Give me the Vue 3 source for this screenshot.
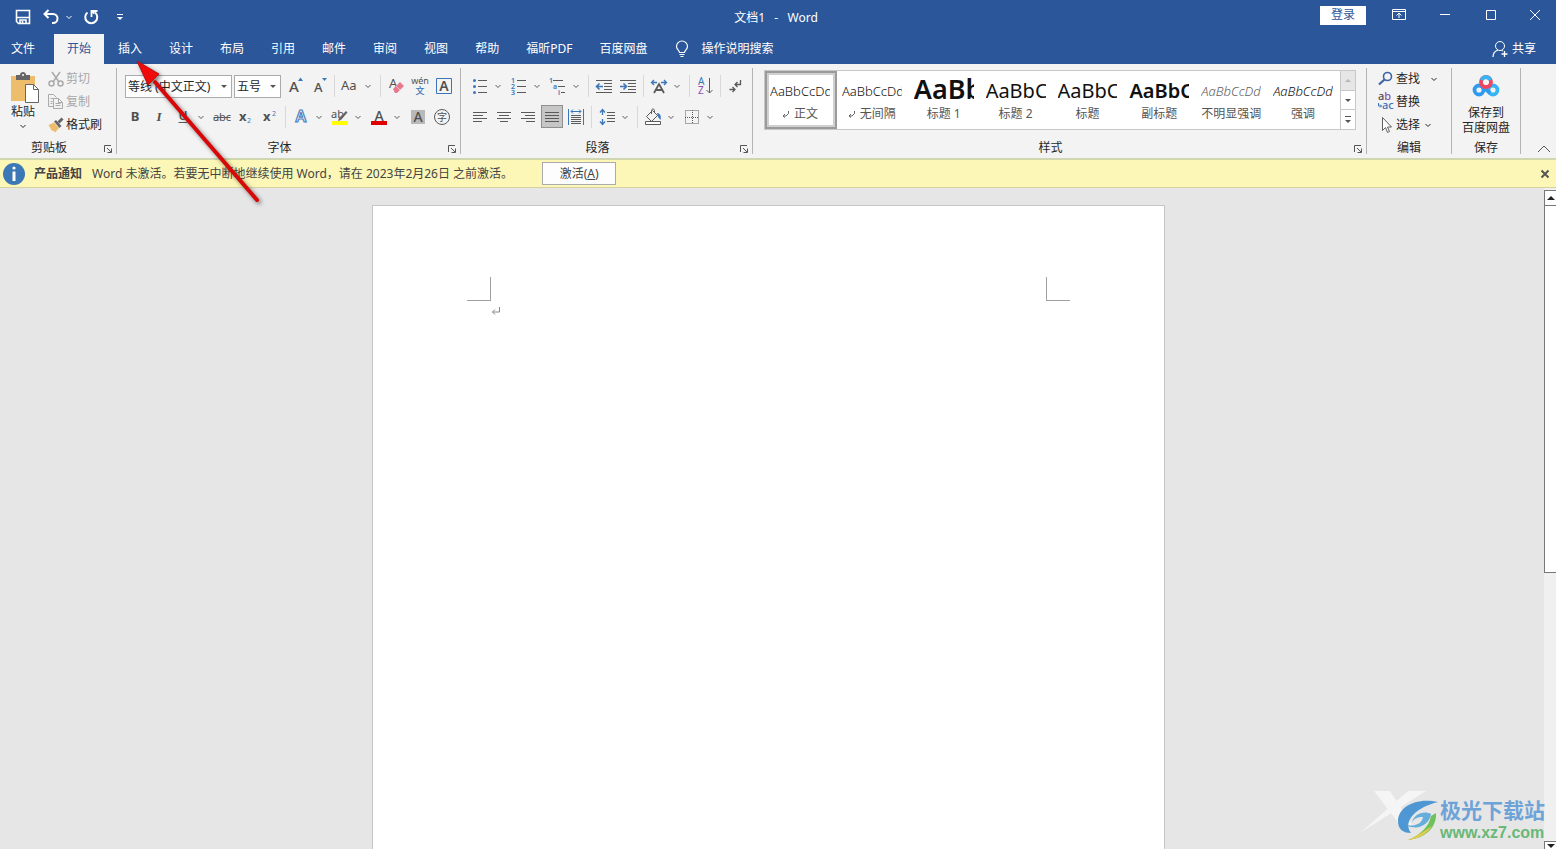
<script setup>
import { ref } from 'vue'

const tabs = ['开始', '插入', '设计', '布局', '引用', '邮件', '审阅', '视图', '帮助', '福昕PDF', '百度网盘']
const activeTab = ref('开始')
const fontName = ref('等线 (中文正文)')
const fontSize = ref('五号')

const gray = '#5a5a5a'
const lines = (xs, color = gray) =>
  xs.map(([x1, x2, y]) => `<path d="M${x1} ${y}.5H${x2}" stroke="${color}" fill="none"/>`).join('')

const icons = {
  save: '<path d="M5.500 5.500h13v13h-11l-2-2z" stroke-width="1.600"/><path d="M5.500 12.500h13M9 18v-3h6v3M11.500 18v-2" stroke-width="1.600"/>',
  undo: '<path d="M9.500 5 5.500 9l4 4M6 9h8a4.500 4.500 0 0 1 0 9h-1" stroke-width="2"/>',
  redo: '<path d="M8.500 7.500a6 6 0 1 0 7.500 0" stroke-width="2"/><path d="M18.500 6h-6v6M12.500 6l3 2.500" stroke-width="1.800"/>',
  more: '<path d="M9 9.500h6"/><path d="M9 12h6l-3 3z" fill="currentColor" stroke="none"/>',
  ribbonOptions: '<path d="M5.500 6.500h13v10h-13zM5.500 8.500h13M12 15v-5M9.500 12.500 12 10l2.500 2.500"/>',
  minimize: '<path d="M7 11.500h10"/>',
  maximize: '<path d="M7.500 7.500h9v9h-9z"/>',
  close: '<path d="m7 7 10 10M17 7 7 17"/>',
  bulb: '<path d="M9.500 15.500c0-2-3-3-3-6a5 5 0 0 1 11 0c0 3-3 4-3 6zM9.500 17.500h5M10.500 19.500h3" stroke-width="1.200"/>',
  person: '<circle cx="12" cy="9" r="4.500"/><path d="M5 20c0-4 2-6 5-7M14 13.500l1 .5M16.500 14v6M13.500 17h6" stroke-width="1.300"/>',
  cut: '<g stroke="#aaa" stroke-width="1.500"><path d="M8 5l7 10M16 5 9 15"/><circle cx="7.500" cy="16.500" r="2.500"/><circle cx="16.500" cy="16.500" r="2.500"/></g>',
  copy: '<g stroke="#aaa"><path d="M9.500 16.500h-5v-12h5l3 3M6.500 8.500h3M6.500 11.500h2M6.500 13.500h2"/><path d="M9.500 8.500h5l4 4v6h-9zM14.500 8.500v4h4M11.500 13.500h5M11.500 15.500h5"/></g>',
  painter: '<path d="M4.500 12 10 9.500l5 5.500-4 4.500-2-2-1 .5z" fill="#eebd6c" stroke="none"/><path d="M10 8.500l2-1.500 5.500 6-2 2z" fill="#666" stroke="none"/><path d="M14.500 9.500l4-4" stroke="#666" stroke-width="3"/>',
  grow: '<text x="6" y="18" font-size="15" font-weight="500">A</text><path d="m15 7 2.500-3.500L20 7z" fill="#3b76b8" stroke="none"/>',
  shrink: '<text x="7" y="18" font-size="13" font-weight="500">A</text><path d="m15 4 2.500 3L20 4z" fill="#3b76b8" stroke="none"/>',
  caseChange: '<text x="3" y="16" font-size="13">Aa</text>',
  clear: '<text x="5" y="14" font-size="13">A</text><path d="m9 15 7-7 4 4-7 7h-2z" fill="#e8798b" stroke="none"/><path d="m12 12 4 4" stroke="#f6c3ca"/>',
  phonetic: '<text x="12" y="10" font-size="9" text-anchor="middle">wén</text><text x="12" y="20" font-size="9" font-weight="500" text-anchor="middle" class="b">文</text>',
  border: '<path d="M4.500 4.500h15v15h-15z" stroke="#3b76b8"/><text x="12" y="17" font-size="14" font-weight="600" text-anchor="middle">A</text>',
  bold: '<text x="12" y="16" font-size="13" font-weight="700" text-anchor="middle">B</text>',
  italic: '<text x="12" y="16" font-size="13" font-weight="600" font-style="italic" font-family="Liberation Serif, serif" text-anchor="middle">I</text>',
  underline: '<text x="12" y="15" font-size="12" font-weight="600" text-anchor="middle">U</text><path d="M7.500 17.500h9"/>',
  strike: '<text x="12" y="16" font-size="11" text-anchor="middle">abc</text><path d="M3.500 12.500h17"/>',
  sub: '<text x="5" y="16" font-size="13" font-weight="700">x</text><text x="13" y="18" font-size="7" class="b">2</text>',
  sup: '<text x="5" y="16" font-size="13" font-weight="700">x</text><text x="14" y="11" font-size="7" class="b">2</text>',
  effect: '<text x="12" y="17" font-size="16" font-weight="600" text-anchor="middle" class="glow">A</text>',
  highlight: '<text x="3" y="13" font-size="11">ab</text><path d="m10 16 1-3 7-7 1.500 1.500-6.500 7.500z" fill="#666" stroke="none"/><path d="M4 16h16v4H4z" fill="#ff0" stroke="none"/>',
  color: '<text x="12" y="16" font-size="14" font-weight="500" text-anchor="middle">A</text><path d="M4 16h16v4H4z" fill="#e00000" stroke="none"/>',
  shade: '<path d="M5 5h14v14H5z" fill="#b9b9b9" stroke="none"/><text x="12" y="17" font-size="14" font-weight="500" text-anchor="middle">A</text>',
  circled: '<circle cx="12" cy="12" r="7.500"/><text x="12" y="16" font-size="10" text-anchor="middle">字</text>',
  bullets: lines([[10, 19, 6], [10, 19, 12], [10, 19, 18]]) + '<g fill="#3b76b8" stroke="none"><circle cx="6.500" cy="6.500" r="1.500"/><circle cx="6.500" cy="12.500" r="1.500"/><circle cx="6.500" cy="18.500" r="1.500"/></g>',
  numbers: lines([[10, 19, 6], [10, 19, 12], [10, 19, 18]]) + '<text x="4" y="9" font-size="7" font-weight="600" class="b">1</text><text x="4" y="15" font-size="7" font-weight="600" class="b">2</text><text x="4" y="21" font-size="7" font-weight="600" class="b">3</text>',
  multilevel: lines([[7, 17, 6], [12, 19, 12], [15, 19, 18]]) + '<text x="3" y="9" font-size="7" font-weight="600" class="b">1</text><text x="7" y="15" font-size="7" font-weight="600" class="b">a</text><text x="12" y="21" font-size="7" font-weight="600" class="b">i</text>',
  outdent: lines([[4, 20, 6], [12, 20, 9], [12, 20, 12], [12, 20, 15], [4, 20, 18]]) + '<path d="M11 12.500H5M7.500 9.500l-3 3 3 3" stroke="#3b76b8" stroke-width="1.600"/>',
  indent: lines([[4, 20, 6], [12, 20, 9], [12, 20, 12], [12, 20, 15], [4, 20, 18]]) + '<path d="M4 12.500h6M7.500 9.500l3 3-3 3" stroke="#3b76b8" stroke-width="1.600"/>',
  asian: '<path d="m7 19 5-9 5 9M9 16h6" stroke-width="1.800"/><path d="M10 8.500H4.500M7 6 4.500 8.500 7 11M14 8.500h5.500M17 6l2.500 2.500L17 11" stroke="#3b76b8" stroke-width="1.300"/>',
  sort: '<text x="5" y="11" font-size="10" class="b">A</text><text x="5" y="20" font-size="10" fill="#8a4fb5">Z</text><path d="M16.500 4v15M13.500 16l3 3 3-3"/>',
  marks: '<path d="M16.500 6v4.500H11M13.500 8l-2.500 2.500 2.500 2.500M5.500 15.500H11M8.500 13l2.500 2.500L8.500 18" stroke-width="1.300"/>',
  left: lines([[5, 19, 7], [5, 15, 10], [5, 19, 13], [5, 14, 16]]),
  center: lines([[5, 19, 7], [7, 17, 10], [5, 19, 13], [8, 16, 16]]),
  right: lines([[5, 19, 7], [9, 19, 10], [5, 19, 13], [10, 19, 16]]),
  justify: lines([[5, 19, 7], [5, 19, 10], [5, 19, 13], [5, 19, 16]]),
  distribute: lines([[7, 17, 10], [7, 17, 12], [7, 17, 14], [7, 17, 16], [7, 17, 18]]) + '<path d="M4.500 4v16M19.500 4v16M7 6.500h10M9 4.500l-2 2 2 2M15 4.500l2 2-2 2" stroke="#3b76b8"/>',
  spacing: lines([[12, 20, 7], [12, 20, 10], [12, 20, 13], [12, 20, 16]]) + '<path d="M7.500 5v5M7.500 14v5M5 7.500l2.500-3 2.500 3M5 16.500l2.500 3 2.500-3" stroke="#3b76b8" stroke-width="1.300"/>',
  bucket: '<path d="m5.500 11.500 6-6 5 5-6 6zM10.500 9V5.500c0-2 3-2 3 0V8"/><path d="M16 8c3 0 4.500 3 3.500 7l-2.500-3z" fill="#3b76b8" stroke="none"/><path d="M4.500 16.500h15v3h-15z" fill="#fff"/>',
  grid: '<path d="M5.500 5.500h13v13h-13zM12.500 5v13M5 12.500h13" stroke-dasharray="1 1"/>',
  find: '<circle cx="13.500" cy="9.500" r="4" stroke="#3b64a8" stroke-width="1.600"/><path d="m10.500 12.500-5.500 5" stroke="#3b64a8" stroke-width="2.200"/>',
  replace: '<text x="4" y="10" font-size="11" font-weight="500">a<tspan fill="#8a4fb5">b</tspan></text><text x="8" y="19" font-size="11" font-weight="500" class="b">ac</text><path d="M4.500 13v3h3M6 14.500 7.500 16 6 17.500" stroke="#3b76b8"/>',
  select: '<path d="M8.500 4.500v13l3-3 2 5 2-1-2-4.500h4z" fill="#fff"/>'
}

const fontTop = [
  { icon: 'grow', label: '增大字号' },
  { icon: 'shrink', label: '减小字号' },
  { sep: true },
  { icon: 'caseChange', label: '更改大小写', menu: true },
  { sep: true },
  { icon: 'clear', label: '清除格式' },
  { icon: 'phonetic', label: '拼音指南' },
  { icon: 'border', label: '字符边框' }
]
const fontBottom = [
  { icon: 'bold', label: '加粗' },
  { icon: 'italic', label: '倾斜' },
  { icon: 'underline', label: '下划线', menu: true },
  { icon: 'strike', label: '删除线' },
  { icon: 'sub', label: '下标' },
  { icon: 'sup', label: '上标' },
  { sep: true },
  { icon: 'effect', label: '文本效果', menu: true },
  { icon: 'highlight', label: '突出显示', menu: true },
  { icon: 'color', label: '字体颜色', menu: true },
  { icon: 'shade', label: '字符底纹' },
  { icon: 'circled', label: '带圈字符' }
]
const paraTop = [
  { icon: 'bullets', label: '项目符号', menu: true },
  { icon: 'numbers', label: '编号', menu: true },
  { icon: 'multilevel', label: '多级列表', menu: true },
  { sep: true },
  { icon: 'outdent', label: '减少缩进量' },
  { icon: 'indent', label: '增加缩进量' },
  { sep: true },
  { icon: 'asian', label: '中文版式', menu: true },
  { sep: true },
  { icon: 'sort', label: '排序' },
  { sep: true },
  { icon: 'marks', label: '显示编辑标记' }
]
const paraBottom = [
  { icon: 'left', label: '左对齐' },
  { icon: 'center', label: '居中' },
  { icon: 'right', label: '右对齐' },
  { icon: 'justify', label: '两端对齐', on: true },
  { icon: 'distribute', label: '分散对齐' },
  { sep: true },
  { icon: 'spacing', label: '行距', menu: true },
  { sep: true },
  { icon: 'bucket', label: '底纹', menu: true },
  { icon: 'grid', label: '边框', menu: true }
]
const styleItems = [
  { sample: 'AaBbCcDd', name: '正文', kind: 'body', mark: true },
  { sample: 'AaBbCcDd', name: '无间隔', kind: 'body', mark: true },
  { sample: 'AaBb', name: '标题 1', kind: 'h1' },
  { sample: 'AaBbC', name: '标题 2', kind: 'h2' },
  { sample: 'AaBbC', name: '标题', kind: 'h2' },
  { sample: 'AaBbC', name: '副标题', kind: 'h2 strong' },
  { sample: 'AaBbCcDd', name: '不明显强调', kind: 'body slant faint' },
  { sample: 'AaBbCcDd', name: '强调', kind: 'body slant' }
]
const activeStyle = ref('正文')
</script>

<template>
  <div class="app">
    <header class="titlebar">
      <div class="quick">
        <button aria-label="保存"><svg class="ic" viewBox="0 0 24 24" v-html="icons.save" /></button>
        <button class="undo" aria-label="撤消"><svg class="ic" viewBox="0 0 24 24" v-html="icons.undo" /><svg class="caret" viewBox="0 0 12 12"><path d="m3.500 5 2.500 2.500L8.500 5" /></svg></button>
        <button aria-label="重复"><svg class="ic" viewBox="0 0 24 24" v-html="icons.redo" /></button>
        <button class="more" aria-label="自定义快速访问工具栏"><svg class="ic" viewBox="0 0 24 24" v-html="icons.more" /></button>
      </div>
      <div class="doc-title">文档1&nbsp;&nbsp; - &nbsp;&nbsp;Word</div>
      <div class="window">
        <button class="login">登录</button>
        <button class="win" aria-label="功能区显示选项"><svg class="ic" viewBox="0 0 24 24" v-html="icons.ribbonOptions" /></button>
        <button class="win" aria-label="最小化"><svg class="ic" viewBox="0 0 24 24" v-html="icons.minimize" /></button>
        <button class="win" aria-label="最大化"><svg class="ic" viewBox="0 0 24 24" v-html="icons.maximize" /></button>
        <button class="win last" aria-label="关闭"><svg class="ic" viewBox="0 0 24 24" v-html="icons.close" /></button>
      </div>
    </header>

    <nav class="tabs">
      <button class="file">文件</button>
      <button v-for="t in tabs" :key="t" class="tab" :class="{ active: t === activeTab }" @click="activeTab = t">{{ t }}</button>
      <button class="tell"><svg class="ic" viewBox="0 0 24 24" v-html="icons.bulb" />操作说明搜索</button>
      <button class="share"><svg class="ic" viewBox="0 0 24 24" v-html="icons.person" />共享</button>
    </nav>

    <section class="ribbon">
      <div class="group clipboard">
        <div class="body clip-body">
          <button class="paste">
            <svg class="paste-icon" viewBox="0 0 30 32">
              <path d="M1 4h24v25H1z" fill="#eebd6c" />
              <path d="M6 3h4c0-4 6-4 6 0h4v5H6z" fill="#666" />
              <circle cx="13" cy="3" r="1" fill="#fff" />
              <path d="M15.500 12.500h8l5 5v13h-13z" fill="#fff" stroke="#666" />
              <path d="M23.500 12.500v5h5" fill="none" stroke="#666" />
            </svg>
            <span>粘贴</span>
            <svg class="caret" viewBox="0 0 12 12"><path d="m3.500 5 2.500 2.500L8.500 5" /></svg>
          </button>
          <div class="stack">
            <button class="line off" disabled><svg class="ic" viewBox="0 0 24 24" v-html="icons.cut" />剪切</button>
            <button class="line off" disabled><svg class="ic" viewBox="0 0 24 24" v-html="icons.copy" />复制</button>
            <button class="line"><svg class="ic" viewBox="0 0 24 24" v-html="icons.painter" />格式刷</button>
          </div>
        </div>
        <footer class="caption"><span>剪贴板</span><button class="launch" aria-label="剪贴板设置"><svg viewBox="0 0 9 9"><path d="M.5 7V.5H7M3 3l4 4M7.500 3.500v4h-4" /></svg></button></footer>
      </div>

      <div class="group font">
        <div class="body rows">
          <div class="row first">
            <label class="combo wide"><select v-model="fontName" aria-label="字体"><option>等线 (中文正文)</option></select></label>
            <label class="combo"><select v-model="fontSize" aria-label="字号"><option>五号</option></select></label>
            <template v-for="(b, i) in fontTop" :key="i">
              <i v-if="b.sep" class="sep" />
              <button v-else class="tool" :class="{ split: b.menu }" :aria-label="b.label">
                <svg class="ic" viewBox="0 0 24 24" v-html="icons[b.icon]" />
                <svg v-if="b.menu" class="caret" viewBox="0 0 12 12"><path d="m3.500 5 2.500 2.500L8.500 5" /></svg>
              </button>
            </template>
          </div>
          <div class="row">
            <template v-for="(b, i) in fontBottom" :key="i">
              <i v-if="b.sep" class="sep" />
              <button v-else class="tool" :class="{ split: b.menu }" :aria-label="b.label">
                <svg class="ic" viewBox="0 0 24 24" v-html="icons[b.icon]" />
                <svg v-if="b.menu" class="caret" viewBox="0 0 12 12"><path d="m3.500 5 2.500 2.500L8.500 5" /></svg>
              </button>
            </template>
          </div>
        </div>
        <footer class="caption"><span>字体</span><button class="launch" aria-label="字体设置"><svg viewBox="0 0 9 9"><path d="M.5 7V.5H7M3 3l4 4M7.500 3.500v4h-4" /></svg></button></footer>
      </div>

      <div class="group para">
        <div class="body rows">
          <div v-for="(list, r) in [paraTop, paraBottom]" :key="r" class="row">
            <template v-for="(b, i) in list" :key="i">
              <i v-if="b.sep" class="sep" />
              <button v-else class="tool" :class="{ split: b.menu, on: b.on }" :aria-label="b.label">
                <svg class="ic" viewBox="0 0 24 24" v-html="icons[b.icon]" />
                <svg v-if="b.menu" class="caret" viewBox="0 0 12 12"><path d="m3.500 5 2.500 2.500L8.500 5" /></svg>
              </button>
            </template>
          </div>
        </div>
        <footer class="caption"><span>段落</span><button class="launch" aria-label="段落设置"><svg viewBox="0 0 9 9"><path d="M.5 7V.5H7M3 3l4 4M7.500 3.500v4h-4" /></svg></button></footer>
      </div>

      <div class="group styles">
        <div class="body">
          <div class="gallery">
            <button v-for="s in styleItems" :key="s.name" class="style" :class="{ picked: s.name === activeStyle }" @click="activeStyle = s.name">
              <span class="sample" :class="s.kind">{{ s.sample }}</span>
              <span class="style-name"><svg v-if="s.mark" class="ret" viewBox="0 0 8 8"><path d="M6.500 1v2.500L4 6H1M3 4 1 6l2 1.500" /></svg>{{ s.name }}</span>
            </button>
            <div class="scroller">
              <button class="dim" aria-label="上一行"><svg viewBox="0 0 8 8"><path d="M1 6h6L4 3z" /></svg></button>
              <button aria-label="下一行"><svg viewBox="0 0 8 8"><path d="M1 3h6L4 6z" /></svg></button>
              <button aria-label="其他样式"><svg viewBox="0 0 8 8"><path d="M1 0h6v1H1zM1 4h6L4 7z" /></svg></button>
            </div>
          </div>
        </div>
        <footer class="caption"><span>样式</span><button class="launch" aria-label="样式设置"><svg viewBox="0 0 9 9"><path d="M.5 7V.5H7M3 3l4 4M7.500 3.500v4h-4" /></svg></button></footer>
      </div>

      <div class="group edit">
        <div class="body stack">
          <button class="line find"><svg class="ic" viewBox="0 0 24 24" v-html="icons.find" />查找<svg class="caret" viewBox="0 0 12 12"><path d="m3.500 5 2.500 2.500L8.500 5" /></svg></button>
          <button class="line"><svg class="ic" viewBox="0 0 24 24" v-html="icons.replace" />替换</button>
          <button class="line"><svg class="ic" viewBox="0 0 24 24" v-html="icons.select" />选择<svg class="caret" viewBox="0 0 12 12"><path d="m3.500 5 2.500 2.500L8.500 5" /></svg></button>
        </div>
        <footer class="caption plain"><span>编辑</span></footer>
      </div>

      <div class="group cloud">
        <div class="body">
          <button class="netdisk">
            <svg viewBox="0 0 28 24">
              <g fill="none" stroke-width="3.800">
                <circle cx="7" cy="16" r="4.500" stroke="#2f9bee" />
                <circle cx="21" cy="16" r="4.500" stroke="#35b5f5" />
                <path d="m10 12 8 7" stroke="#2f9bee" />
                <circle cx="14" cy="8" r="5" stroke="#ef4660" />
                <path d="M9.500 6a5 5 0 0 1 9 0" stroke="#35b5f5" />
              </g>
            </svg>
            <span>保存到</span><span>百度网盘</span>
          </button>
        </div>
        <footer class="caption plain"><span>保存</span></footer>
      </div>
      <button class="collapse" aria-label="折叠功能区"><svg viewBox="0 0 14 8"><path d="m1 7 6-6 6 6" /></svg></button>
    </section>

    <section class="notice">
      <svg class="info" viewBox="0 0 22 22"><circle cx="11" cy="11" r="11" fill="#3b78b5" /><circle cx="11" cy="5" r="1.600" fill="#fff" /><path d="M9.500 8.500h3V18h-3z" fill="#fff" /></svg>
      <strong>产品通知</strong>
      <span>Word 未激活。若要无中断地继续使用 Word，请在 2023年2月26日 之前激活。</span>
      <button class="activate">激活(<u>A</u>)</button>
      <button class="dismiss" aria-label="关闭通知"><svg viewBox="0 0 10 10"><path d="m1.500 1.500 7 7M8.500 1.500l-7 7" /></svg></button>
    </section>

    <main class="workspace">
      <div class="canvas">
        <article class="page">
          <div class="corners"><i class="corner l" /><i class="corner r" /></div>
          <svg class="pilcrow" viewBox="0 0 10 10"><path d="M8.500 1v5H1.500M4 3.500 1.500 6 4 8.500" /></svg>
        </article>
      </div>
      <div class="scrollbar">
        <button class="arrow" aria-label="向上滚动"><svg viewBox="0 0 8 8"><path d="M0 6h8L4 2z" /></svg></button>
        <div class="thumb" />
        <button class="arrow end" aria-label="向下滚动"><svg viewBox="0 0 8 8"><path d="M0 2h8L4 6z" /></svg></button>
      </div>
    </main>

    <svg class="pointer" viewBox="0 0 140 160">
      <path d="M130 144 28 26" stroke="#d80808" stroke-width="4" stroke-linecap="round" />
      <path d="M10 5 32 18 21 29z" fill="#f00a0a" stroke="#c01010" />
    </svg>

    <aside class="watermark">
      <svg class="ghost-mark" viewBox="0 0 70 44"><path d="M16 1h16l22 34H42zM68 1 2 43 50 1z" fill="#fff" /></svg>
      <svg class="swirl" viewBox="0 0 44 42">
        <path d="M42 3C20-2 2 8 2 22c0 9 6 12 13 12C8 26 14 10 42 3z" fill="#3f8fd2" />
        <path d="M10 26c8 2 16-1 17-8-6 0-9 2-11 5 2-8 12-12 19-8-1 9-12 18-25 11z" fill="#58a8dc" />
        <path d="M40 14c1 14-10 25-28 27 12-5 21-13 23-24z" fill="#63bd4c" />
        <path d="M12 41c10-1 19-6 24-14-7 5-14 9-24 14z" fill="#e5c93c" />
      </svg>
      <div class="words"><b>极光下载站</b><em>www.xz7.com</em></div>
    </aside>
  </div>
</template>

<style>
body { overflow: hidden; }
</style>

<style scoped>
.app {
  position: relative;
  display: flex;
  flex-direction: column;
  height: 100vh;
  overflow: hidden;
  background: #e6e6e6;
  color: #262626;
  font: 12px/16px "Noto Sans", "Noto Sans CJK SC", sans-serif;
}
button, select { font: inherit; color: inherit; }
button {
  display: flex;
  align-items: center;
  justify-content: center;
  padding: 0;
  border: 0;
  background: none;
  white-space: nowrap;
}
svg { display: block; flex: none; }
.ic { width: 24px; height: 24px; fill: none; stroke: currentColor; }
.ic :deep(text) { fill: #505050; stroke: none; }
.ic :deep(text[fill]) { fill: #8a4fb5; }
.ic :deep(.b) { fill: #3b76b8; }
.ic :deep(.glow) { fill: #fff; stroke: #4a80c0; stroke-width: 1.2; }
.caret { width: 12px; height: 12px; fill: none; stroke: currentColor; }

.titlebar {
  display: grid;
  grid-template-columns: 1fr auto 1fr;
  height: 34px;
  background: #2b579a;
  color: #fff;
}
.quick { display: flex; align-items: center; padding-left: 11px; }
.undo { margin: 0 4px; }
.more { margin-left: 5px; }
.doc-title { align-self: center; padding: 1px 4px 0 0; }
.window { display: flex; justify-content: flex-end; align-items: center; padding-bottom: 4px; }
.login { width: 46px; height: 19px; margin-right: 10px; background: #fff; color: #2b579a; }
.win { width: 46px; height: 30px; }
.win.last { width: 42px; }

.tabs { display: flex; height: 30px; flex: none; background: #2b579a; color: #fff; }
.file { width: 46px; margin-right: 8px; }
.tab { padding: 0 13px; margin-right: 1px; }
.tab.active { background: #f3f3f3; color: #2b579a; }
.tell { gap: 7px; margin-left: 9px; }
.share { margin: 0 20px 0 auto; }

.ribbon {
  display: flex;
  flex: none;
  height: 94px;
  background: #f3f3f3;
  border-bottom: 2px solid #cfd6b0;
}
.group {
  display: flex;
  flex-direction: column;
  flex: none;
  position: relative;
  margin: 4px 0;
  border-right: 1px solid #b4b4b4;
}
.body { flex: 1; }
.clipboard { width: 116px; }
.font { width: 343px; }
.para { width: 291px; }
.styles { flex: 1; min-width: 0; }
.edit { width: 84px; }
.cloud { width: 68px; }
.caption { display: flex; height: 13px; align-items: center; justify-content: center; padding-right: 18px; }
.caption.plain { padding-right: 0; }
.launch { position: absolute; right: 3px; bottom: 0; width: 9px; height: 9px; }
.launch svg { width: 9px; height: 9px; fill: none; stroke: #555; }

.clip-body { display: flex; }
.paste { flex-direction: column; justify-content: flex-start; width: 46px; padding-top: 4px; }
.paste-icon { width: 30px; height: 32px; margin-left: 4px; }
.stack { display: flex; flex-direction: column; margin-top: -1px; }
.line { height: 23px; justify-content: flex-start; }
.paste, .line { color: #262626; }
.line.off { color: #a8a8a8; }
.line .ic { color: #606060; margin-right: -2px; }
.clip-body .stack { margin-left: -2px; }

.rows { display: flex; flex-direction: column; gap: 6px; padding: 5px 0 0 6px; }
.para .rows { padding-left: 7px; }
.row { display: flex; height: 25px; align-items: center; }
.row.first { padding-left: 2px; }
.tool { height: 23px; color: #5a5a5a; }
.tool.split { padding-right: 3px; }
.tool.on { width: 22px; margin: 0 1px; background: #c6c6c6; outline: 1px solid #8f8f8f; outline-offset: -1px; }
.tool.on .ic { margin: 0 -1px; }
.sep { width: 1px; height: 22px; margin: 0 3px; background: #d8d8d8; }
.combo {
  position: relative;
  align-self: flex-end;
  width: 47px;
  height: 23px;
  margin-right: 2px;
  background: #fff;
  box-sizing: border-box;
  border: 1px solid #ababab;
}
.combo.wide { width: 107px; }
.combo::after {
  content: "";
  position: absolute;
  right: 4px;
  top: 9px;
  border: 3px solid transparent;
  border-top-color: #555;
  border-bottom: 0;
}
.combo select {
  display: block;
  width: 100%;
  height: 21px;
  padding: 0 2px;
  border: 0;
  background: none;
  appearance: none;
}

.gallery {
  display: flex;
  height: 60px;
  margin: 2px 10px 0 11px;
  box-sizing: border-box;
  border: 1px solid #c8c8c8;
  background: #fff;
}
.style { flex: 1; min-width: 0; flex-direction: column; justify-content: flex-start; padding: 6px 7px 0 5px; }
.style.picked { outline: 2px solid #9b9b9b; outline-offset: -2px; box-shadow: inset 0 0 0 4px #d0d0d0; }
.sample {
  height: 29px;
  width: 100%;
  flex: none;
  overflow: hidden;
  text-align: left;
  line-height: 28px;
  color: #111;
}
.sample.body { font-size: 13px; font-weight: 300; }
.sample.h1 { font-size: 27px; font-weight: 600; line-height: 24px; }
.sample.h2 { font-size: 20px; }
.sample.strong { font-weight: 600; }
.sample.slant { font-style: italic; }
.sample.faint { color: #606060; }
.style-name { display: flex; align-items: center; gap: 4px; color: #555; }
.ret { width: 8px; height: 8px; fill: none; stroke: #666; }
.scroller { display: flex; flex-direction: column; width: 14px; border-left: 1px solid #c8c8c8; }
.scroller button { flex: 1; border-top: 1px solid #c8c8c8; }
.scroller button.dim { background: #e6e6e6; border: 0; }
.scroller svg { width: 8px; height: 8px; fill: #555; }
.scroller .dim svg { fill: #b8b8b8; }

.edit .line { padding-left: 7px; }
.edit .line .caret { margin-left: 2px; }
.edit .line.find .caret { margin-left: 8px; }
.netdisk { flex-direction: column; width: 100%; padding-top: 6px; line-height: 15px; color: #262626; }
.netdisk svg { width: 28px; height: 24px; margin-bottom: 7px; }
.collapse { width: 35px; padding: 0 0 5px 11px; align-items: flex-end; }
.collapse svg { width: 14px; height: 8px; fill: none; stroke: #555; }

.notice {
  display: flex;
  flex: none;
  align-items: center;
  height: 27px;
  padding: 0 6px 0 3px;
  border-bottom: 1px solid #d6d3a0;
  background: #fcf7b6;
  color: #444;
}
.info { width: 22px; height: 22px; margin-right: 9px; }
.notice strong { margin-right: 10px; }
.activate { width: 74px; height: 23px; margin-left: 29px; border: 1px solid #ababab; background: #fdfdfd; }
.dismiss { margin-left: auto; }
.dismiss svg { width: 10px; height: 10px; fill: none; stroke: #555; stroke-width: 2; }

.workspace { display: flex; flex: 1; min-height: 0; }
.canvas { display: flex; flex: 1; justify-content: center; padding: 17px 8px 0 0; }
.page {
  width: 793px;
  box-sizing: border-box;
  padding: 71px 94px 0;
  border: 1px solid #c6c6c6;
  border-bottom: 0;
  background: #fff;
}
.corners { display: flex; justify-content: space-between; }
.corner { width: 23px; height: 23px; border: 0 solid #a0a0a0; border-bottom-width: 1px; }
.corner.l { border-right-width: 1px; }
.corner.r { border-left-width: 1px; }
.pilcrow { width: 10px; height: 10px; margin: 5px 0 0 24px; fill: none; stroke: #888; }
.scrollbar { display: flex; flex-direction: column; width: 12px; padding-top: 2px; background: #f0f0f0; }
.arrow { height: 16px; border: 1px solid #777; border-right: 0; background: #fff; }
.arrow svg { width: 8px; height: 8px; fill: #222; }
.thumb { height: 55.500%; border: 1px solid #777; border-right: 0; border-top: 0; background: #fff; }
.arrow.end { margin: auto 0 -8px; align-items: flex-start; }

.pointer {
  position: absolute;
  left: 127px;
  top: 56px;
  width: 140px;
  height: 160px;
  fill: none;
  filter: drop-shadow(2px 2px 2px rgba(0, 0, 0, 0.5));
  pointer-events: none;
}
.watermark {
  position: absolute;
  right: 11px;
  bottom: 7px;
  display: flex;
  align-items: center;
  pointer-events: none;
}
.ghost-mark { position: absolute; left: -38px; top: -8px; width: 70px; height: 44px; opacity: 0.6; }
.swirl { position: relative; width: 44px; height: 42px; opacity: 0.9; }
.words { position: relative; display: flex; flex-direction: column; gap: 2px; }
.words b { font-size: 21px; line-height: 24px; color: #6ea3d8; }
.words em { font: 700 16px/18px "Liberation Sans", sans-serif; color: #68b878; }
</style>
